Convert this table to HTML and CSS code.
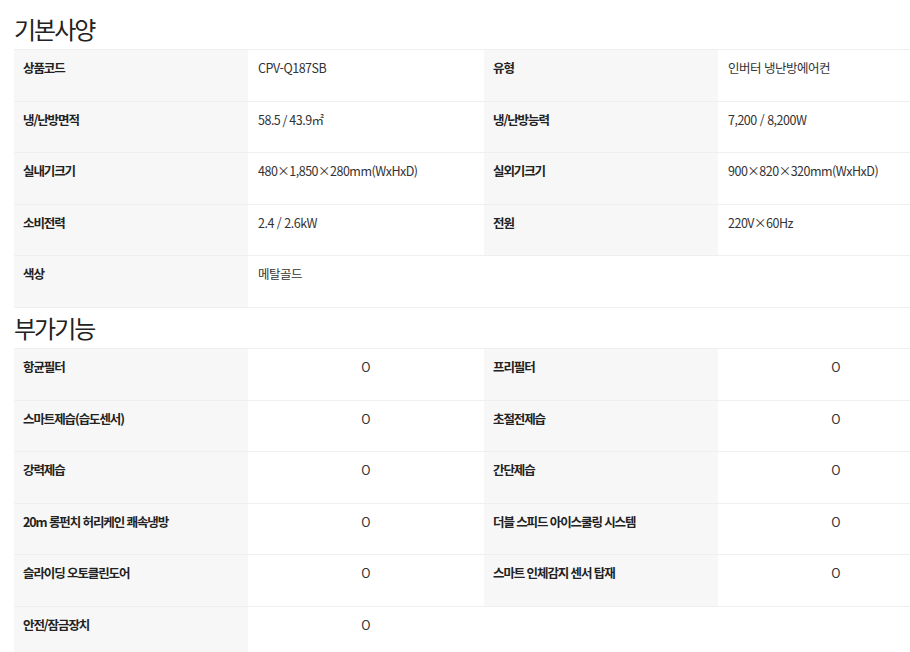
FILE: index.html
```html
<!DOCTYPE html>
<html lang="ko">
<head>
<meta charset="utf-8">
<title>기본사양</title>
<link rel="stylesheet" href="styles.css">
</head>
<body>
<div class="page">
  <h2 class="sec-title first">기본사양</h2>
  <div class="spec">
    <div class="th">상품코드</div><div class="td">CPV-Q187SB</div>
    <div class="th">유형</div><div class="td">인버터 냉난방에어컨</div>
    <div class="th">냉/난방면적</div><div class="td">58.5 / 43.9㎡</div>
    <div class="th">냉/난방능력</div><div class="td">7,200 / 8,200W</div>
    <div class="th">실내기크기</div><div class="td">480×1,850×280mm(WxHxD)</div>
    <div class="th">실외기크기</div><div class="td">900×820×320mm(WxHxD)</div>
    <div class="th">소비전력</div><div class="td">2.4 / 2.6kW</div>
    <div class="th">전원</div><div class="td">220V×60Hz</div>
    <div class="th">색상</div><div class="td">메탈골드</div>
    <div class="td"></div><div class="td"></div>
  </div>
  <h2 class="sec-title">부가기능</h2>
  <div class="spec">
    <div class="th">항균필터</div><div class="td center">O</div>
    <div class="th">프리필터</div><div class="td center">O</div>
    <div class="th">스마트제습(습도센서)</div><div class="td center">O</div>
    <div class="th">초절전제습</div><div class="td center">O</div>
    <div class="th">강력제습</div><div class="td center">O</div>
    <div class="th">간단제습</div><div class="td center">O</div>
    <div class="th">20m 롱펀치 허리케인 쾌속냉방</div><div class="td center">O</div>
    <div class="th">더블 스피드 아이스쿨링 시스템</div><div class="td center">O</div>
    <div class="th">슬라이딩 오토클린도어</div><div class="td center">O</div>
    <div class="th">스마트 인체감지 센서 탑재</div><div class="td center">O</div>
    <div class="th">안전/잠금장치</div><div class="td center">O</div>
    <div class="td"></div><div class="td"></div>
  </div>
</div>
</body>
</html>
```
FILE: styles.css
```css
html {
  overflow: hidden;
}
body {
  margin: 0;
  background: #fff;
  color: #333;
  font-family: "Noto Sans CJK KR", "Noto Sans", sans-serif;
}
.page {
  padding-left: 14px;
  width: 940px;
}
.sec-title {
  margin: 0;
  font-size: 24px;
  font-weight: 400;
  line-height: 40px;
  color: #222;
  letter-spacing: -2px;
}
.sec-title.first {
  padding-top: 9px;
}
.spec {
  display: grid;
  grid-template-columns: 234px 236px 234px 236px;
  border-top: 1px solid #efefef;
}
.th, .td {
  box-sizing: border-box;
  height: 51.6px;
  padding: 8px 9px 0 9px;
  font-size: 12.5px;
  line-height: 20px;
  border-bottom: 1px solid #efefef;
}
.th {
  background: #f7f7f7;
  font-weight: 700;
  color: #222;
  letter-spacing: -1.1px;
}
.td {
  padding-left: 10px;
  color: #333;
  letter-spacing: -0.5px;
}
.td.center {
  text-align: center;
  padding-left: 0;
  padding-right: 0;
  letter-spacing: 0;
}
```
